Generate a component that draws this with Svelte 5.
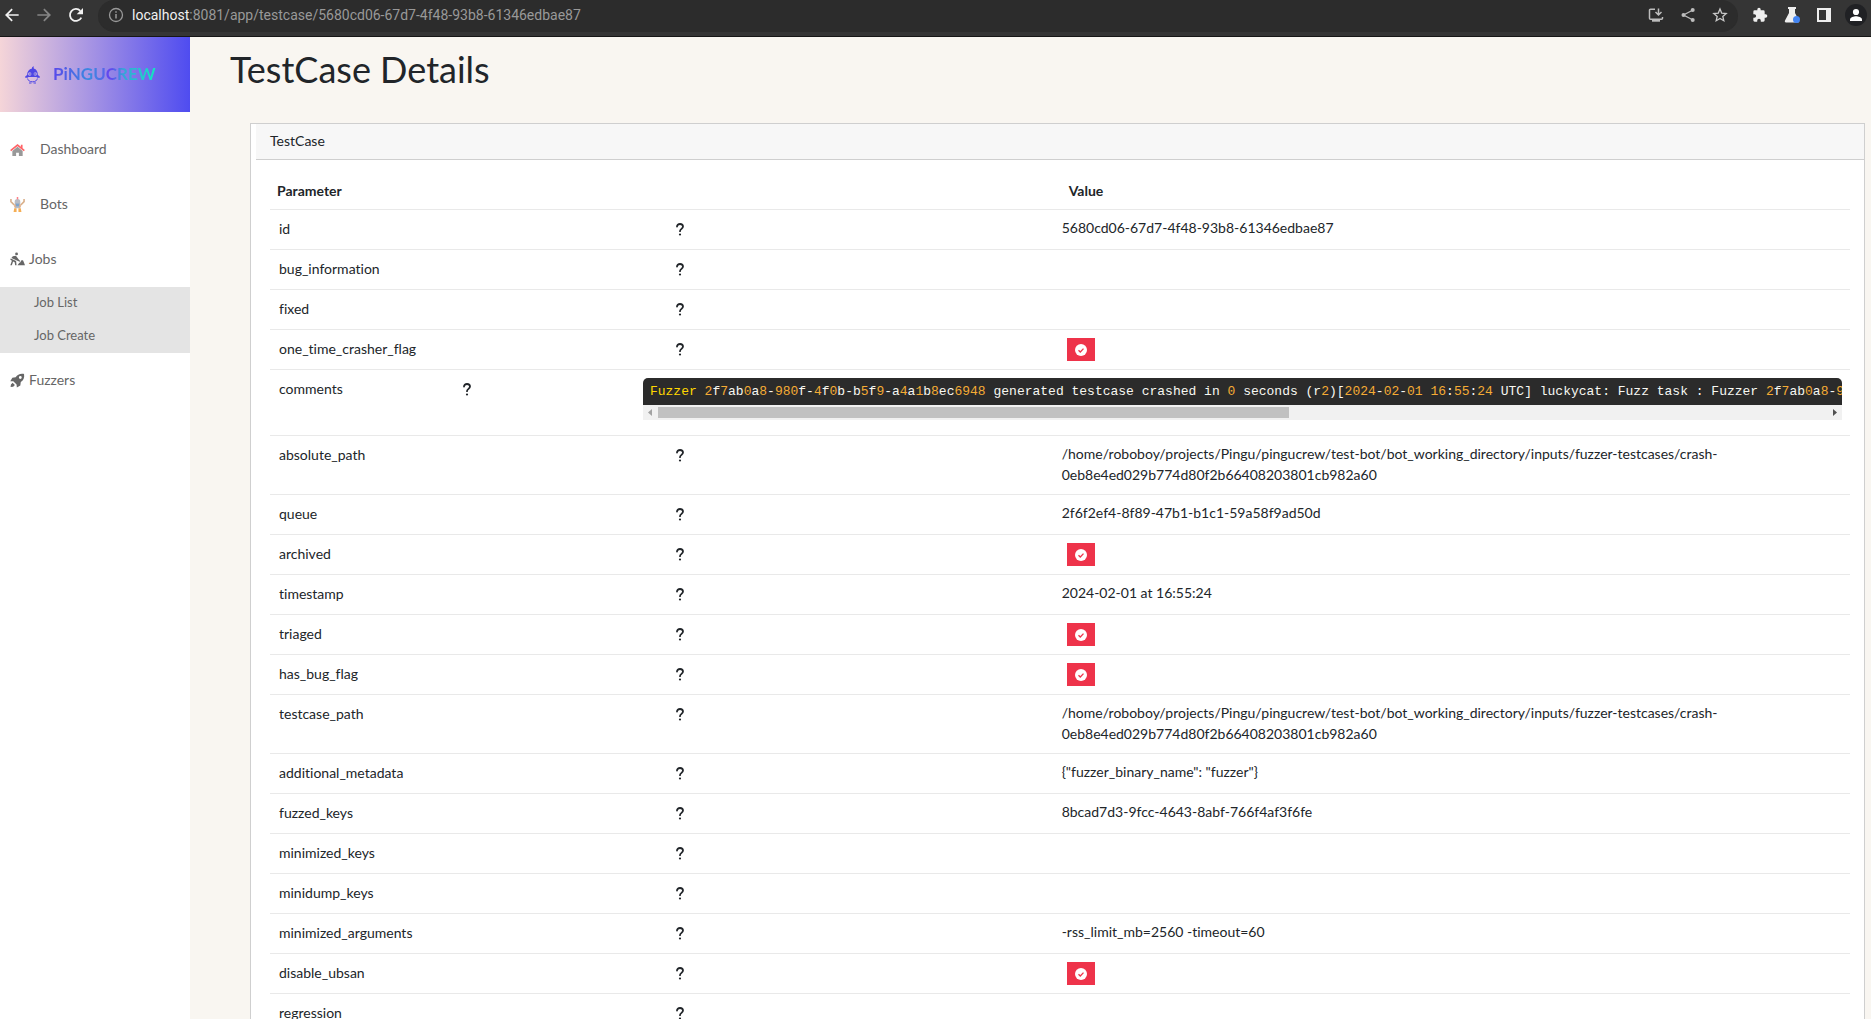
<script>
  const hash = '/home/roboboy/projects/Pingu/pingucrew/test-bot/bot_working_directory/inputs/fuzzer-testcases/crash-0eb8e4ed029b774d80f2b66408203801cb982a60';
  const comment =
    'Fuzzer 2f7ab0a8-980f-4f0b-b5f9-a4a1b8ec6948 generated testcase crashed in 0 seconds (r2)[2024-02-01 16:55:24 UTC] luckycat: Fuzz task : Fuzzer 2f7ab0a8-980f';
  const tokens = comment.split(/(^Fuzzer|\d+)/).filter(Boolean).map((text, i) => ({
    text,
    kind: /^\d/.test(text) ? 'number' : i === 0 ? 'keyword' : 'plain'
  }));
  const rows = [
    { name: 'id', value: '5680cd06-67d7-4f48-93b8-61346edbae87' },
    { name: 'bug_information' },
    { name: 'fixed' },
    { name: 'one_time_crasher_flag', flag: true },
    { name: 'comments', code: true },
    { name: 'absolute_path', value: hash },
    { name: 'queue', value: '2f6f2ef4-8f89-47b1-b1c1-59a58f9ad50d' },
    { name: 'archived', flag: true },
    { name: 'timestamp', value: '2024-02-01 at 16:55:24' },
    { name: 'triaged', flag: true },
    { name: 'has_bug_flag', flag: true },
    { name: 'testcase_path', value: hash },
    { name: 'additional_metadata', value: '{"fuzzer_binary_name": "fuzzer"}' },
    { name: 'fuzzed_keys', value: '8bcad7d3-9fcc-4643-8abf-766f4af3f6fe' },
    { name: 'minimized_keys' },
    { name: 'minidump_keys' },
    { name: 'minimized_arguments', value: '-rss_limit_mb=2560 -timeout=60' },
    { name: 'disable_ubsan', flag: true },
    { name: 'regression' }
  ];
</script>

{#snippet help()}
  <svg class="help" viewBox="0 0 8 13" role="img" aria-label="Help">
    <path d="M1 3.600C1 2 2.200 1 4 1s3 1 3 2.600c0 2.200-3 2.300-3 4.600" fill="none" stroke="#212529" stroke-width="1.800" stroke-linecap="round" />
    <circle cx="4" cy="11.500" r="1.100" fill="#212529" />
  </svg>
{/snippet}

<div class="window">
  <header class="browser">
    <div class="nav-buttons">
      <button aria-label="Back"><svg viewBox="0 0 24 24"><path fill="#f1f1f1" d="M22 10.700H6.500l6.600-6.600L11.300 2.200 1.500 12l9.800 9.800 1.800-1.900-6.600-6.600H22z" /></svg></button>
      <button aria-label="Forward"><svg viewBox="0 0 24 24"><path fill="#858585" d="M2 10.700h15.500l-6.600-6.600 1.800-1.900L22.500 12l-9.800 9.800-1.800-1.900 6.600-6.600H2z" /></svg></button>
      <button aria-label="Reload"><svg viewBox="0 0 24 24"><path d="M20 16a9 9 0 1 1-1.500-10.300" fill="none" stroke="#f1f1f1" stroke-width="2.700" /><path fill="#f1f1f1" d="M22.500 1.500v9.500H13z" /></svg></button>
    </div>
    <div class="address">
      <svg viewBox="0 0 16 16" width="16" height="16"><circle cx="8" cy="8" r="6.500" fill="none" stroke="#999" stroke-width="1.300" /><path d="M8 7v4.500M8 4.200v1.600" stroke="#999" stroke-width="1.500" /></svg>
      <span class="url"><b>localhost</b>:8081/app/testcase/5680cd06-67d7-4f48-93b8-61346edbae87</span>
      <button aria-label="Install"><svg viewBox="0 0 16 16" fill="none" stroke="#bdbdbd" stroke-width="1.500"><path d="M7 2.200H2.500a1 1 0 0 0-1 1v8a1 1 0 0 0 1 1h11a1 1 0 0 0 1-1V10M10.500 1.500v6M7.500 5l3 3 3-3" /><path d="M4 13.700h8" stroke-width="2" /></svg></button>
      <button aria-label="Share"><svg viewBox="0 0 16 16"><path d="M13 3 3.500 8l9.500 5" fill="none" stroke="#bdbdbd" stroke-width="1.300" /><circle cx="12.700" cy="3" r="2" fill="#bdbdbd" /><circle cx="3.500" cy="8" r="2" fill="#bdbdbd" /><circle cx="12.700" cy="13" r="2" fill="#bdbdbd" /></svg></button>
      <button aria-label="Bookmark"><svg viewBox="0 0 16 16"><path d="m8 2 1.700 4.100 4.500.4-3.400 2.900 1 4.300L8 11.400l-3.800 2.300 1-4.300-3.400-2.900 4.500-.4z" fill="none" stroke="#c9c9c9" stroke-width="1.300" /></svg></button>
    </div>
    <div class="tools">
      <button aria-label="Extensions"><svg viewBox="0 0 24 24"><path fill="#eee" d="M20.500 11H19V7a2 2 0 0 0-2-2h-4V3.500a2.500 2.500 0 0 0-5 0V5H4a2 2 0 0 0-2 2v3.800h1.500a2.700 2.700 0 0 1 0 5.400H2V20c0 1.100.9 2 2 2h3.800v-1.500a2.700 2.700 0 0 1 5.400 0V22H17a2 2 0 0 0 2-2v-4h1.500a2.500 2.500 0 0 0 0-5z" /></svg></button>
      <button aria-label="Experiments"><svg viewBox="0 0 16 16"><path fill="#eee" d="M4 0h8v2h-1v4l4 7.500c.5 1-.1 2-1 2H2c-.9 0-1.500-1-1-2L5 6V2H4z" /><circle cx="12.500" cy="12.500" r="3.500" fill="#4285f4" /></svg></button>
      <button aria-label="Side panel"><svg viewBox="0 0 16 16"><path fill="#eee" fill-rule="evenodd" d="M1 1h14v14H1zm2 2v10h7V3z" /></svg></button>
      <button class="profile" aria-label="Profile"><svg viewBox="0 0 22 22"><circle cx="11" cy="11" r="11" fill="#202124" /><circle cx="11" cy="8" r="3.100" fill="#fff" /><path fill="#fff" d="M5 17v-1.500c0-2.300 4-3.300 6-3.300s6 1 6 3.300V17z" /></svg></button>
    </div>
  </header>

  <div class="app">
    <aside>
      <a class="brand" href="#home">
        <svg viewBox="0 0 15 18" aria-hidden="true">
          <path fill="#4f46e5" d="M7 1.500 8.500 0l.3 2.500C11.500 3.300 12.700 5.500 12.900 9l1.900 1.500v1.300h-2.300l-1-.8H3.500l-1 .8H.2v-1.300L2.100 9C2.200 5.500 4 3 7 2.500z" />
          <circle cx="4.700" cy="8" r="1.700" fill="#c5b5e0" /><circle cx="10.300" cy="8" r="1.700" fill="#b5a6e0" />
          <circle cx="5" cy="8" r=".8" fill="#4f46e5" /><circle cx="10" cy="8" r=".8" fill="#4f46e5" />
          <path d="M2.600 12.500c.5 2 2 3.300 4.900 3.300s4.400-1.300 4.900-3.300M4 17h2.500M8.500 17H11" fill="none" stroke="#4f46e5" />
        </svg>
        <span class="wordmark"><span class="first">PiNGU</span><span class="second">CREW</span></span>
      </a>
      <nav>
        <a class="item" href="#dashboard">
          <svg viewBox="0 0 16 16"><path fill="#999" d="M2.500 9.500 8 5l5.500 4.500V15H9.500v-3.500h-3V15h-4z" /><path d="M.7 9.300 8 3.200l7.300 6.100M12.500 3v4" fill="none" stroke="#ff6367" stroke-width="1.800" /></svg>
          <span class="wide">Dashboard</span>
        </a>
        <a class="item" href="#bots">
          <svg viewBox="0 0 16 16"><path d="M1 2v3l3.500 3.500M15 2v3l-3.500 3.500" fill="none" stroke="#d9b08a" stroke-width="1.700" /><path fill="#b9bcc4" d="M5 5a3 3 0 0 1 6 0v7H5z" /><path fill="#ff7f86" d="M7.200 0h1.600v2.500H7.200z" /><path fill="#7ea5cc" d="M6 7h4v3H6z" /><path fill="#e9ae82" d="M4.500 8H6v3H4.500zM10 8h1.500v3H10z" /><path fill="#f5ae55" d="M4.500 12H7v4H3.800zM9 12h2.500l.7 4H9z" /></svg>
          <span class="wide">Bots</span>
        </a>
        <a class="item" href="#jobs">
          <svg viewBox="0 0 16 16"><g fill="#666"><circle cx="7" cy="2" r="1.500" /><path d="M3 4.500 6.300 4l3.200 4.200L11 9.500l-.7 1L1.500 6.300zM.8 7l5.700 2.700L7 14H5.500L5 11 3.300 10 2 14H.3L2 9.200.3 8zM8 14l2-2.500.8-.2L12.500 8.500l1.500.6 2 4.900z" /></g></svg>
          <span>Jobs</span>
        </a>
        <div class="submenu">
          <a href="#job-list">Job List</a>
          <a href="#job-create">Job Create</a>
        </div>
        <a class="item" href="#fuzzers">
          <svg viewBox="0 0 16 16"><path fill="#666" fill-rule="evenodd" d="M14.500.8C10.500.2 8 1.800 6 4.500L2.500 5 .3 8.700l3.200.2L7 12.300l.3 3.200L11 13.200l.5-3.500c2.600-2 4.200-4.600 3.500-8.500zM11 3.300a1.500 1.500 0 1 1 0 3 1.500 1.500 0 0 1 0-3zM2.800 10.500 1 12.200.6 15l2.800-.3 1.800-1.800z" /></svg>
          <span>Fuzzers</span>
        </a>
      </nav>
    </aside>

    <main>
      <h1>TestCase Details</h1>
      <section class="card">
        <h2>TestCase</h2>
        <div class="body">
          <table>
            <colgroup><col class="c1" /><col class="c2" /><col class="c3" /><col class="c4" /><col /></colgroup>
            <thead>
              <tr><th colspan="4">Parameter</th><th class="value-head">Value</th></tr>
            </thead>
            <tbody>
              {#each rows as row}
                <tr>
                  <td class="name" colspan={row.code ? 1 : 3}>{row.name}</td>
                  <td class="hint">{@render help()}</td>
                  {#if row.code}
                    <td colspan="3">
                      <pre>{#each tokens as token}<span class={token.kind}>{token.text}</span>{/each}</pre>
                      <div class="scrollbar" aria-hidden="true">
                        <svg viewBox="0 0 15 15"><path fill="#a3a3a3" d="M9 4v7L5 7.500z" /></svg>
                        <div class="track"><div class="thumb"></div></div>
                        <svg viewBox="0 0 15 15"><path fill="#505050" d="M6 4v7l4-3.500z" /></svg>
                      </div>
                    </td>
                  {:else if row.flag}
                    <td>
                      <span class="badge"><svg viewBox="0 0 12 12" role="img" aria-label="Checked"><circle cx="6" cy="6" r="6" fill="#fff" /><path d="M3.500 6.200 5.300 8l3.200-3.400" fill="none" stroke="#ee334a" stroke-width="1.300" /></svg></span>
                    </td>
                  {:else}
                    <td class="value">{row.value ?? ''}</td>
                  {/if}
                </tr>
              {/each}
            </tbody>
          </table>
        </div>
      </section>
    </main>
  </div>
</div>

<style>
  :global(body) { overflow: hidden; }
  .window {
    height: 100vh;
    overflow: hidden;
    display: flex;
    flex-direction: column;
    font-family: Lato, "Noto Sans", sans-serif;
    font-size: 14px;
    line-height: 21px;
    font-variant-ligatures: none;
    color: #212529;
  }
  a { color: inherit; text-decoration: none; }
  button { border: 0; padding: 0; background: none; display: block; width: 16px; height: 16px; }
  button svg { display: block; width: 100%; height: 100%; }

  .browser {
    flex: none;
    display: flex;
    height: 36px;
    background: #353535;
    border-bottom: 1px solid #161616;
    padding-right: 4px;
  }
  .nav-buttons { display: flex; gap: 16px; padding: 7px 14px 0 4px; }
  .address {
    flex: 1;
    display: flex;
    align-items: center;
    gap: 16px;
    height: 30px;
    padding: 0 10px;
    border-bottom: 2px solid #2c2c2c;
    border-radius: 16px;
    background: #2c2c2c;
    font-family: Roboto, "Noto Sans", sans-serif;
    color: #999;
  }
  .url { flex: 1; margin-left: -8px; }
  .url b { font-weight: 400; color: #f1f1f1; }
  .tools { display: flex; gap: 16px; padding: 7px 0 0 14px; }
  .profile { width: 22px; height: 22px; margin: -3px 0 0 -3px; }

  .app { flex: 1; min-height: 0; display: flex; }
  aside { flex: none; width: 190px; background: #fff; color: #666; }
  .brand {
    display: flex;
    align-items: center;
    gap: 13px;
    height: 75px;
    padding-left: 25px;
    box-sizing: border-box;
    background: linear-gradient(90deg, #f5d5d8, #4f4cf0);
  }
  .brand svg { width: 15px; height: 18px; }
  .wordmark { padding-bottom: 2px; font-size: 17px; font-weight: 700; }
  .wordmark span { background-clip: text; color: transparent; }
  .first { background-image: linear-gradient(90deg, #5a48ea, #3a8be0 70%, #5a62ea); }
  .second { background-image: linear-gradient(90deg, #6248ee 10%, #35a5d8 35%, #12e8c0); }
  nav { padding-top: 10px; }
  .item { display: flex; align-items: center; gap: 4px; height: 55px; padding-left: 10px; }
  .item svg { width: 15px; height: 15px; }
  .item span { padding-bottom: 2px; }
  .item .wide { padding-left: 11px; }
  .submenu { background: #e4e4e4; font-size: 13px; }
  .submenu a { display: block; padding: 5px 34px 7px; }

  main { flex: 1; min-width: 0; padding: 11px 6px 0 40px; background: #f9f6f1; }
  h1 { margin: 0; font-size: 36px; line-height: 42px; font-weight: 400; }
  .card { margin: 33px 0 0 20px; padding-left: 5px; background: #fff; border: 1px solid #cfcfcf; }
  h2 { margin: 0; padding: 6px 14px 8px; background: #f7f7f7; border-bottom: 1px solid #cfcfcf; font-size: 14px; font-weight: 400; line-height: 21px; }
  .body { padding: 14px; }
  table { width: 100%; table-layout: fixed; border-collapse: collapse; }
  .c1 { width: 11.7%; }
  .c2 { width: 11.4%; }
  .c3 { width: 2.1%; }
  .c4 { width: 24.4%; }
  tr { border-bottom: 1px solid #e9e9e9; }
  th { padding: 6px 7px 8px; height: 21px; text-align: left; font-weight: 700; }
  .value-head { padding-left: 15px; }
  td { height: 23px; padding: 8px; vertical-align: top; }
  td.name { padding-left: 9px; }
  td.value { padding: 7px 8px 9px; }
  .hint svg { display: block; width: 8px; height: 13px; margin-top: 5px; }
  .badge { display: flex; align-items: center; justify-content: center; width: 28px; height: 23px; margin-left: 5px; background: #ee334a; }
  .badge svg { width: 12px; height: 12px; }
  pre {
    margin: 0;
    padding: 3px 7px;
    overflow: hidden;
    border-radius: 5px 5px 0 0;
    background: #2b2b2b;
    color: #f8f8f2;
    font: 13px/21px "Liberation Mono", monospace;
  }
  .keyword { color: #ffd700; }
  .number { color: #f5ab35; }
  .scrollbar { display: flex; height: 15px; margin-bottom: 7px; background: #f1f1f1; }
  .scrollbar svg { width: 15px; height: 15px; }
  .track { flex: 1; padding: 2px 0; }
  .thumb { width: 54%; height: 11px; background: #c1c1c1; }
</style>
